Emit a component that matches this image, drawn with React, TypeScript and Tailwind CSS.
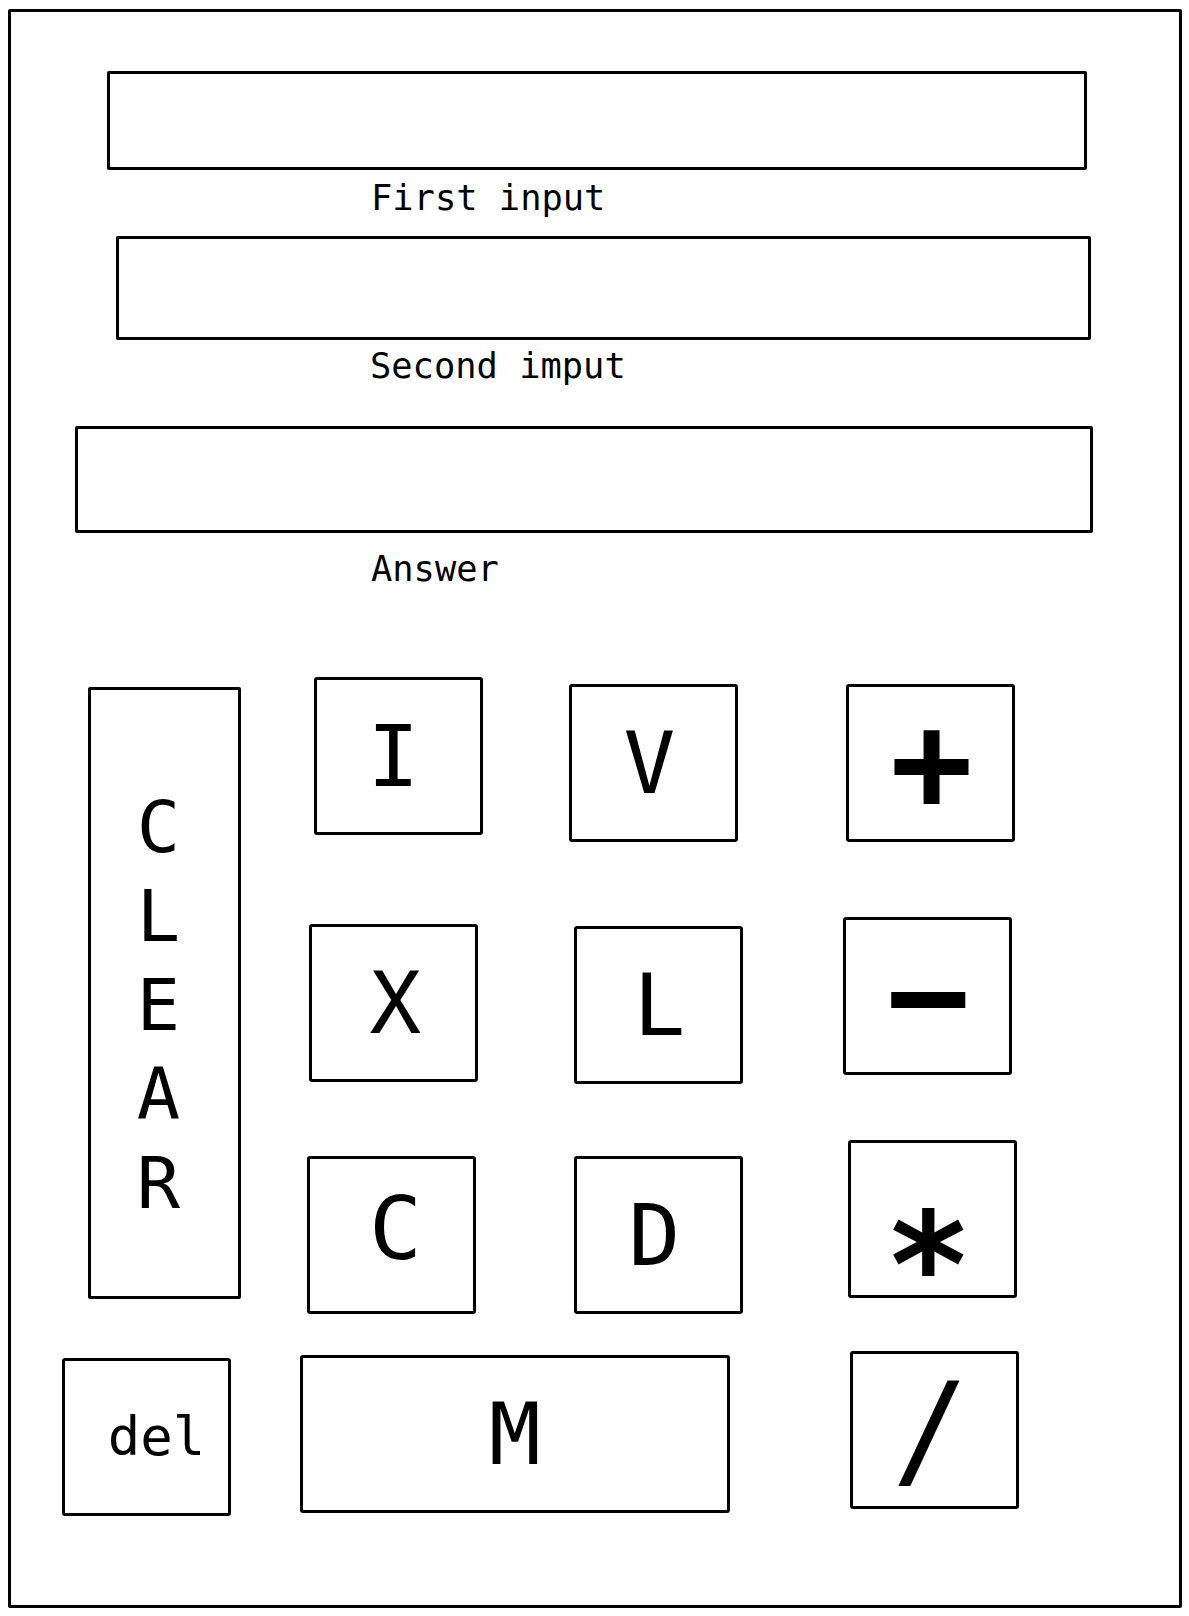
import type React from "react";

const Key: React.FC<{ label: string; className?: string; textClass?: string }> = ({
	label,
	className = "",
	textClass = "",
}) => {
	return (
		<button
			type="button"
			className={`flex shrink-0 items-center justify-center w-[169px] h-[158px] border-[3px] border-black rounded-[3px] bg-white text-black leading-none ${className}`}
		>
			<span className={textClass}>{label}</span>
		</button>
	);
};

export default function App() {
	return (
		<div className="bg-white w-[1189px] h-[1616px] pt-[9px] font-['DejaVu_Sans_Mono',monospace] text-black">
			<div className="ml-[8px] w-[1174px] h-[1599px] border-[3px] border-black rounded-[2px]">
				{/* inputs */}
				<input
					type="text"
					className="block mt-[59px] ml-[96px] w-[980px] h-[99px] border-[3px] border-black rounded-[2px] outline-none"
				/>
				<label className="block mt-[10px] ml-[360px] text-[35.4px] leading-none">
					First input
				</label>
				<input
					type="text"
					className="block mt-[21px] ml-[105px] w-[975px] h-[104px] border-[3px] border-black rounded-[2px] outline-none"
				/>
				<label className="block mt-[8px] ml-[359px] text-[35.4px] leading-none">
					Second imput
				</label>
				<input
					type="text"
					className="block mt-[42px] ml-[64px] w-[1018px] h-[107px] border-[3px] border-black rounded-[2px] outline-none"
				/>
				<label className="block mt-[18px] ml-[360px] text-[35.4px] leading-none">
					Answer
				</label>

				{/* keypad */}
				<div className="flex items-start mt-[91px]">
					<button
						type="button"
						className="flex flex-col items-center justify-center shrink-0 ml-[77px] mt-[10px] w-[153px] h-[612px] border-[3px] border-black rounded-[2px] pt-[24px] pr-[12px] text-[72px] leading-[89px]"
					>
						{"CLEAR".split("").map((ch, i) => (
							<span key={i}>{ch}</span>
						))}
					</button>
					<div className="flex flex-col">
						<div className="flex items-start h-[164px]">
							<Key label="I" className="ml-[73px] pr-[10px]" textClass="text-[86px]" />
							<Key label="V" className="ml-[86px] mt-[7px] pr-[8px]" textClass="text-[86px]" />
							<Key label="+" className="ml-[108px] mt-[7px] pl-[2px]" textClass="text-[138px] font-bold" />
						</div>
						<div className="flex items-start h-[242px]">
							<Key label="X" className="ml-[68px] mt-[83px] pl-[4px]" textClass="text-[86px]" />
							<Key label="L" className="ml-[96px] mt-[85px] pl-[2px]" textClass="text-[86px]" />
							<Key label="−" className="ml-[100px] mt-[76px] pl-[2px]" textClass="text-[138px] font-bold" />
						</div>
						<div className="flex items-start">
							<Key label="C" className="ml-[66px] mt-[73px] pl-[8px] pb-[12px]" textClass="text-[88px]" />
							<Key label="D" className="ml-[98px] mt-[73px] pr-[8px]" textClass="text-[86px]" />
							<Key label="*" className="ml-[105px] mt-[57px] pr-[8px]" textClass="text-[146px] font-bold pt-[94px]" />
						</div>
					</div>
				</div>
				<div className="flex items-start">
					<Key label="del" className="ml-[51px] mt-[44px] pl-[20px]" textClass="text-[54px]" />
					<Key label="M" className="ml-[69px] mt-[41px] w-[430px]" textClass="text-[86px]" />
					<Key label="/" className="ml-[120px] mt-[37px] pr-[8px]" textClass="text-[128px]" />
				</div>
			</div>
		</div>
	);
}
